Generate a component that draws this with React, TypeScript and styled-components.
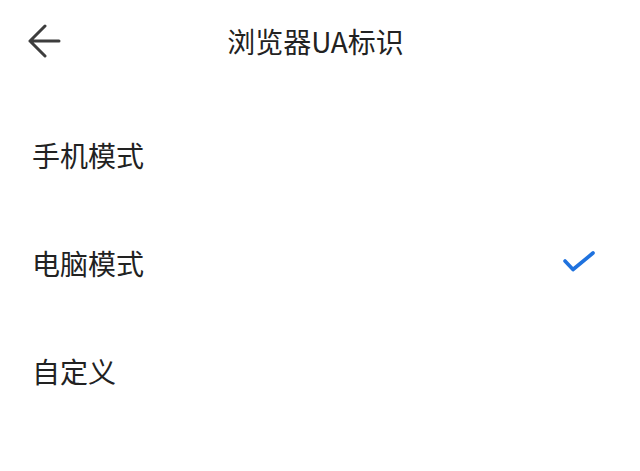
import React from "react";
import styled, { createGlobalStyle } from "styled-components";

const GlobalStyle = createGlobalStyle`
  html, body {
    margin: 0;
    padding: 0;
    background: #ffffff;
  }
  body {
    font-family: "Noto Sans CJK SC", "Noto Sans", sans-serif;
    color: #222222;
  }
`;

const Page = styled.div`
  width: 640px;
  height: 471px;
  background: #ffffff;
  display: flex;
  flex-direction: column;
  overflow: hidden;
`;

const Header = styled.header`
  height: 82px;
  display: grid;
  grid-template-columns: 90px 1fr 90px;
  align-items: center;
`;

const BackButton = styled.button`
  border: none;
  background: transparent;
  padding: 0 0 0 28px;
  height: 40px;
  display: flex;
  align-items: center;
  cursor: pointer;
`;

const Title = styled.h1`
  margin: 0;
  padding-right: 9px;
  text-align: center;
  font-size: 28px;
  font-weight: 400;
  line-height: 1;
  color: #222222;
  letter-spacing: 0;
`;

const List = styled.ul`
  list-style: none;
  margin: 0;
  padding: 19px 0 0 0;
  display: flex;
  flex-direction: column;
`;

const Row = styled.li`
  height: 108px;
  display: flex;
  align-items: center;
  justify-content: space-between;
  padding: 0 44px 0 32px;
`;

const Label = styled.span`
  font-size: 28px;
  line-height: 1;
  color: #222222;
`;

const Check = styled.svg`
  width: 34px;
  height: 26px;
  display: block;
`;

const options = [
  { label: "手机模式", selected: false },
  { label: "电脑模式", selected: true },
  { label: "自定义", selected: false },
];

export default function App() {
  return (
    <>
      <GlobalStyle />
      <Page>
        <Header>
          <BackButton aria-label="返回">
            <svg width="34" height="34" viewBox="0 0 34 34" fill="none">
              <path
                d="M17 2 L2 17 L17 32 M2 17 H31"
                stroke="#3d3d3d"
                strokeWidth="3"
                strokeLinecap="round"
                strokeLinejoin="round"
              />
            </svg>
          </BackButton>
          <Title>浏览器UA标识</Title>
          <div />
        </Header>
        <List>
          {options.map((o) => (
            <Row key={o.label}>
              <Label>{o.label}</Label>
              {o.selected && (
                <Check viewBox="0 0 34 26" fill="none">
                  <path
                    d="M3 11 L11 19.5 L31 3"
                    stroke="#1f72de"
                    strokeWidth="3.6"
                    strokeLinecap="round"
                    strokeLinejoin="round"
                  />
                </Check>
              )}
            </Row>
          ))}
        </List>
      </Page>
    </>
  );
}
